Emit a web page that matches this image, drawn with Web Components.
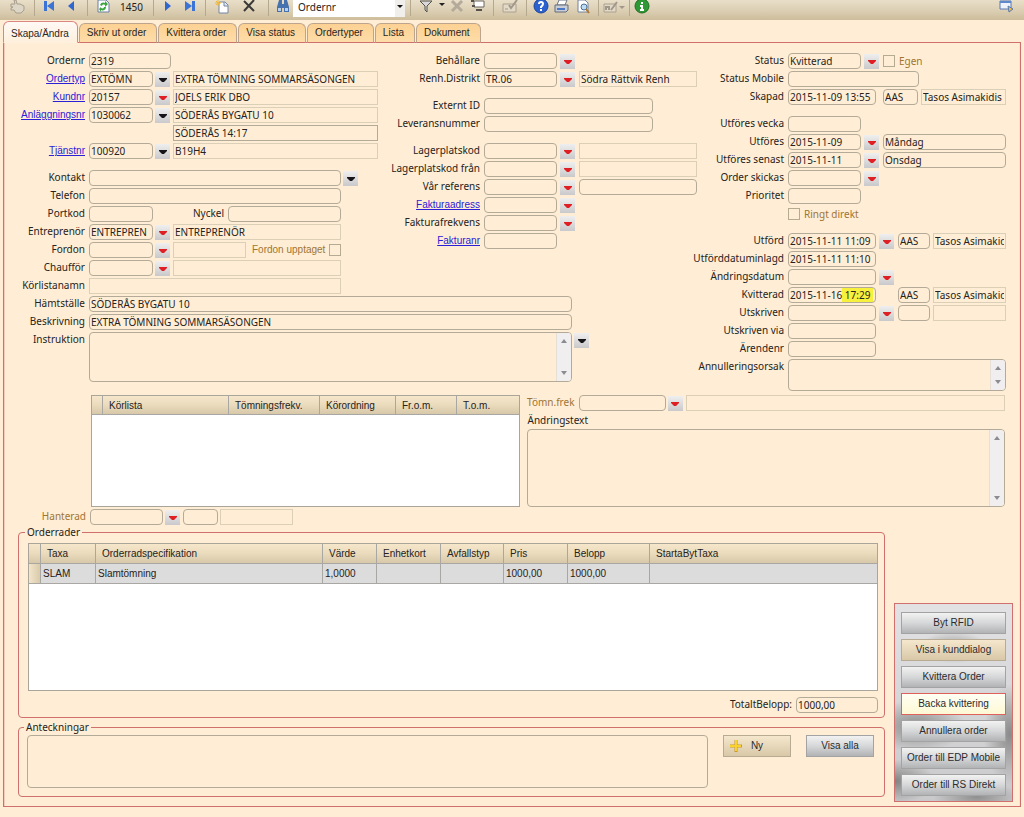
<!DOCTYPE html>
<html lang="sv">
<head>
<meta charset="utf-8">
<meta name="viewport" content="width=device-width, initial-scale=1">
<title>Order 2319</title>
<style>
  html, body { margin: 0; padding: 0; }
  body {
    background: #ffeed5;
    color: #262220;
    font: 10px/14px "Noto Sans", "Liberation Sans", sans-serif;
    --paper: #ffeed5;
    --line: #b3aa98;
    --faint: #dccfb8;
    --red: #d0706c;
    --brown: #a07434;
    --sans: "Liberation Sans", Arial, sans-serif;
  }
</style>
</head>
<body>
<order-page></order-page>

<template id="page">
  <style>
    :host { display: block; }
    .form { display: grid; grid-template-columns: 391fr 295fr 316fr; grid-template-rows: auto 1fr; padding: 10px 14px 0 0; }
    .col { display: flex; flex-direction: column; gap: 2px; min-width: 0; }
    .left { --lw: 81px; --gap: 2px; }
    .mid { --lw: 85px; --gap: 3px; }
    .right { grid-column: 3; grid-row: 1 / 3; --lw: 94px; --gap: 3px; }
    .wide { grid-column: 1 / 3; padding-top: 2px; --lw: 81px; --gap: 2px; }
    .brk { margin-top: 9px; }
    .middle { display: grid; grid-template-columns: 429fr 479fr; gap: 7px; padding: 4px 15px 0 87px; }
    .middle > .col { --lw: 48px; --gap: 2px; gap: 0; }
    .hant { margin-top: 2px; --lw: 82px; --gap: 2px; }
    .bottom { display: grid; grid-template-columns: 1fr 119px; column-gap: 9px; padding: 0 7px 4px 14px; }
    .sets { display: flex; flex-direction: column; gap: 2px; min-width: 0; padding-bottom: 5px; }
    .side { align-self: end; }
    .total { margin-top: 6px; display: flex; justify-content: flex-end; --lw: 80px; }
    .notes { display: flex; gap: 15px; align-items: flex-start; padding: 0 4px 0 0; }
    .notes note-area { flex: 1; }
    .sp1 { width: 1px; } .sp16 { width: 16px; } .sp0 { width: 72px; }
  </style>
  <tool-bar></tool-bar>
  <tab-strip></tab-strip>
  <main-panel>
    <div class="form">
      <div class="col left">
        <form-field label="Ordernr" value="2319" w="82"></form-field>
        <form-field label="Ordertyp" link value="EXTÖMN" w="64"><drop-button name="Ordertyp"></drop-button><text-box flat w="205" value="EXTRA TÖMNING SOMMARSÄSONGEN" name="Ordertyp, namn"></text-box></form-field>
        <form-field label="Kundnr" link value="20157" w="64"><drop-button red name="Kundnr"></drop-button><text-box flat w="205" value="JOELS ERIK DBO" name="Kund, namn"></text-box></form-field>
        <form-field label="Anläggningsnr" link value="1030062" w="64"><drop-button name="Anläggningsnr"></drop-button><text-box flat w="205" value="SÖDERÅS BYGATU 10" name="Anläggning, adress"></text-box></form-field>
        <form-field><span class="sp0"></span><span style="width:8px"></span><text-box square w="205" value="SÖDERÅS 14:17" name="Fastighet"></text-box></form-field>
        <form-field label="Tjänstnr" link value="100920" w="64"><drop-button name="Tjänstnr"></drop-button><text-box flat w="205" value="B19H4" name="Tjänst, namn"></text-box></form-field>
        <form-field class="brk" label="Kontakt" w="252"><drop-button name="Kontakt"></drop-button></form-field>
        <form-field label="Telefon" w="252"></form-field>
        <form-field label="Portkod" w="64"><form-field style="--lw:69px" label="Nyckel" w="113"></form-field></form-field>
        <form-field label="Entreprenör" value="ENTREPREN" w="64"><drop-button red name="Entreprenör"></drop-button><text-box flat w="168" value="ENTREPRENÖR" name="Entreprenör, namn"></text-box></form-field>
        <form-field label="Fordon" w="64"><drop-button red name="Fordon"></drop-button><text-box flat w="73" name="Fordon, namn"></text-box><check-box before label="Fordon upptaget"></check-box></form-field>
        <form-field label="Chaufför" w="64"><drop-button red name="Chaufför"></drop-button><text-box flat w="168" name="Chaufför, namn"></text-box></form-field>
        <form-field label="Körlistanamn" w="252" flat></form-field>
      </div>
      <div class="col mid">
        <form-field label="Behållare" w="73"><drop-button red name="Behållare"></drop-button></form-field>
        <form-field label="Renh.Distrikt" value="TR.06" w="73"><drop-button red name="Renh.Distrikt"></drop-button><text-box flat w="118" value="Södra Rättvik Renh" name="Distrikt, namn"></text-box></form-field>
        <form-field class="brk" label="Externt ID" w="169"></form-field>
        <form-field label="Leveransnummer" w="169"></form-field>
        <form-field class="brk" label="Lagerplatskod" w="73"><drop-button red name="Lagerplatskod"></drop-button><text-box flat w="118" name="Lagerplats"></text-box></form-field>
        <form-field label="Lagerplatskod från" w="73"><drop-button red name="Lagerplatskod från"></drop-button><text-box flat w="118" name="Lagerplats från"></text-box></form-field>
        <form-field label="Vår referens" w="73"><drop-button red name="Vår referens"></drop-button><text-box w="118" name="Vår referens, namn"></text-box></form-field>
        <form-field label="Fakturaadress" link w="73"><drop-button red name="Fakturaadress"></drop-button></form-field>
        <form-field label="Fakturafrekvens" w="73"><drop-button red name="Fakturafrekvens"></drop-button></form-field>
        <form-field label="Fakturanr" link w="73"></form-field>
      </div>
      <div class="col right">
        <form-field label="Status" value="Kvitterad" w="73"><drop-button red name="Status"></drop-button><check-box label="Egen"></check-box></form-field>
        <form-field label="Status Mobile" w="131"></form-field>
        <form-field label="Skapad" value="2015-11-09 13:55" w="88"><span class="sp1"></span><text-box w="35" value="AAS" name="Skapad av"></text-box><text-box flat w="85" value="Tasos Asimakidis" name="Skapad av, namn"></text-box></form-field>
        <form-field class="brk" label="Utföres vecka" w="73"></form-field>
        <form-field label="Utföres" value="2015-11-09" w="73"><drop-button red name="Utföres"></drop-button><text-box w="123" value="Måndag" name="Utföres, veckodag"></text-box></form-field>
        <form-field label="Utföres senast" value="2015-11-11" w="73"><drop-button red name="Utföres senast"></drop-button><text-box w="123" value="Onsdag" name="Utföres senast, veckodag"></text-box></form-field>
        <form-field label="Order skickas" w="73"><drop-button red name="Order skickas"></drop-button></form-field>
        <form-field label="Prioritet" w="73"></form-field>
        <form-field><check-box label="Ringt direkt"></check-box></form-field>
        <form-field class="brk" label="Utförd" value="2015-11-11 11:09" w="88"><drop-button red name="Utförd"></drop-button><text-box w="32" value="AAS" name="Utförd av"></text-box><text-box flat w="73" value="Tasos Asimakidis" name="Utförd av, namn"></text-box></form-field>
        <form-field label="Utförddatuminlagd" value="2015-11-11 11:10" w="88"></form-field>
        <form-field label="Ändringsdatum" w="88"><drop-button red name="Ändringsdatum"></drop-button></form-field>
        <form-field label="Kvitterad" value="2015-11-16 17:29" w="88" mark><span class="sp16"></span><text-box w="32" value="AAS" name="Kvitterad av"></text-box><text-box flat w="73" value="Tasos Asimakidis" name="Kvitterad av, namn"></text-box></form-field>
        <form-field label="Utskriven" w="88"><drop-button red name="Utskriven"></drop-button><text-box w="32" name="Utskriven av"></text-box><text-box flat w="73" name="Utskriven av, namn"></text-box></form-field>
        <form-field label="Utskriven via" w="88"></form-field>
        <form-field label="Ärendenr" w="88"></form-field>
        <note-area label="Annulleringsorsak" h="32" w="218" bar></note-area>
      </div>
      <div class="col wide">
        <form-field label="Hämtställe" value="SÖDERÅS BYGATU 10" w="483"></form-field>
        <form-field label="Beskrivning" value="EXTRA TÖMNING SOMMARSÄSONGEN" w="483"></form-field>
        <note-area label="Instruktion" h="50" w="483" bar><drop-button name="Instruktion"></drop-button></note-area>
      </div>
    </div>

    <div class="middle">
      <data-grid h="112" cols="11,126,91,76,61,0" heads="|Körlista|Tömningsfrekv.|Körordning|Fr.o.m.|T.o.m." name="Körlistor"></data-grid>
      <div class="col">
        <form-field brown label="Tömn.frek" w="87"><drop-button red name="Tömn.frek"></drop-button><text-box flat fill name="Tömningsfrekvens, namn"></text-box></form-field>
        <note-area stack label="Ändringstext" h="78" bar></note-area>
      </div>
    </div>
    <form-field class="hant" brown label="Hanterad" w="73"><drop-button red name="Hanterad"></drop-button><text-box w="35" name="Hanterad av"></text-box><text-box flat w="73" name="Hanterad av, namn"></text-box></form-field>

    <div class="bottom">
      <div class="sets">
        <group-box legend="Orderrader">
          <data-grid h="148" cols="12,55,227,54,64,63,64,82,0" heads="|Taxa|Orderradspecifikation|Värde|Enhetkort|Avfallstyp|Pris|Belopp|StartaBytTaxa" row="|SLAM|Slamtömning|1,0000|||1000,00|1000,00|" name="Orderrader"></data-grid>
          <div class="total"><form-field label="TotaltBelopp:" value="1000,00" w="82"></form-field></div>
        </group-box>
        <group-box legend="Anteckningar">
          <div class="notes">
            <note-area name="Anteckningar" h="53" fill></note-area>
            <push-button tan plus w="68">Ny</push-button>
            <push-button w="68">Visa alla</push-button>
          </div>
        </group-box>
      </div>
      <action-panel class="side">
        <push-button>Byt RFID</push-button>
        <push-button tan>Visa i kunddialog</push-button>
        <push-button>Kvittera Order</push-button>
        <push-button hot>Backa kvittering</push-button>
        <push-button>Annullera order</push-button>
        <push-button>Order till EDP Mobile</push-button>
        <push-button>Order till RS Direkt</push-button>
      </action-panel>
    </div>
  </main-panel>
</template>

<template id="toolbar">
  <style>
    :host { display: block; }
    .bar { display: flex; height: 20px; padding: 0 8px 0 6px; align-items: flex-start; overflow: hidden;
      background: linear-gradient(#e9dfc9, #d9ccb0 60%, #cdbd9c); box-sizing: border-box; }
    button { border: 0; padding: 0; margin: 0; background: none; height: 14px; display: flex; justify-content: center; align-items: flex-start; flex: none; }
    svg { display: block; flex: none; }
    i { width: 1px; height: 16px; margin: 0 4px; background: #b4a88f; flex: none; }
    .n { width: 35px; text-align: center; flex: none; }
    .pick { display: flex; position: relative; width: 112px; margin-right: 1px; flex: none; }
    select { appearance: none; width: 100%; height: 17px; border: 0; border-radius: 0; background: #fff; font: inherit; color: inherit; padding: 0 16px 3px 5px; }
    .pick svg { position: absolute; right: 0; top: 0; pointer-events: none; }
    .end { margin-left: auto; }
  </style>
  <div class="bar">
    <button aria-label="Välj" style="width:24px"><svg width="16" height="14"><path d="M4 0h2l1 4h3l4 2v4l-3 3H6L4 10H1V8l2-1H1V4h4z" fill="#ddd5c5" stroke="#a79d8b"/></svg></button><i></i>
    <button aria-label="Första" style="width:20px"><svg width="12" height="12"><path d="M1 1h3v10H1z" fill="#3c73d6"/><path d="M11 1v10L4 6z" fill="#3c73d6"/></svg></button>
    <button aria-label="Föregående" style="width:24px"><svg width="8" height="12"><path d="M7 1v10L1 6z" fill="#2f66cf"/></svg></button><i></i>
    <button aria-label="Uppdatera" style="width:22px"><svg width="14" height="14"><path d="M2 0h8l3 3v9H2z" fill="#fafcff" stroke="#6c7f9c"/><path d="M4 5c1-3 4-3 5-2V1l3 3-3 3V5C7 4 6 5 6 6z" fill="#3ca53c"/><path d="M10 7c0 3-3 4-5 3v2L3 9l2-2v1c2 1 3 0 3-1z" fill="#3ca53c"/></svg></button>
    <span class="n">1450</span><i></i>
    <button aria-label="Nästa" style="width:20px"><svg width="8" height="12"><path d="M1 1v10l6-5z" fill="#2f66cf"/></svg></button>
    <button aria-label="Sista" style="width:23px"><svg width="12" height="12"><path d="M8 1h3v10H8z" fill="#3c73d6"/><path d="M1 1v10l7-5z" fill="#3c73d6"/></svg></button><i></i>
    <button aria-label="Ny" style="width:24px"><svg width="14" height="14"><path d="M4 2h6l3 3v8H4z" fill="#fff" stroke="#7286a3"/><path d="M9 2v4h4" fill="#dce6f4" stroke="#7286a3"/><path d="M3 0v6M0 3h6M1 1l4 4M5 1L1 5" stroke="#eeb93c"/></svg></button>
    <button aria-label="Ta bort" style="width:30px"><svg width="14" height="13"><path d="M2 1l10 10M12 0L2 11" stroke="#3b3a38" stroke-width="2" fill="none"/></svg></button><i></i>
    <button aria-label="Sök" style="width:20px"><svg width="14" height="13"><path d="M3 0h3v4h2V0h3l2 7v5H8V8H6v4H1V7z" fill="#4672ad"/><path d="M2 8h3v3H2zM9 8h3v3H9z" fill="#b8d0ee"/></svg></button>
    <span class="pick"><select aria-label="Sökfält"><option>Ordernr</option></select><svg width="10" height="17"><path d="M0 0h10v17H0z" fill="#f1efec"/><path d="M2 5h6L5 8z" fill="#111"/></svg></span><i></i>
    <button aria-label="Filter" style="width:22px"><svg width="14" height="13"><path d="M1 1h12L8 6v6l-2-2V6z" fill="#d8d8d8" stroke="#55524d"/></svg></button>
    <button aria-label="Filtermeny" style="width:10px"><svg width="8" height="8"><path d="M1 3h6L4 6z" fill="#222"/></svg></button>
    <button aria-label="Rensa filter" style="width:20px"><svg width="14" height="13"><path d="M2 1l10 10M12 1L2 11" stroke="#b3aa9a" stroke-width="3" fill="none"/></svg></button>
    <button aria-label="Visa" style="width:22px"><svg width="14" height="13"><path d="M3 1h10v6H3z" fill="#fff" stroke="#6a6763"/><path d="M0 1h3M1 6h3M5 10h6" stroke="#55524d" stroke-width="2" fill="none"/></svg></button><i></i>
    <button aria-label="Kontrollera" style="width:24px"><svg width="16" height="13"><path d="M1 4h13v8H1z" fill="#e2d9c7" stroke="#aaa08e"/><path d="M7 5l2 3 6-8" stroke="#a1988a" stroke-width="2" fill="none"/><path d="M3 9h3" stroke="#a1988a"/></svg></button><i></i>
    <button aria-label="Hjälp" style="width:20px"><svg width="16" height="14" viewBox="0 1 16 14"><circle cx="8" cy="7" r="7" fill="#2b62d0" stroke="#1d459a"/><path d="M6 5q0-2 2-2t2 2q0 1-2 3v1M8 10v2" stroke="#fff" stroke-width="2" fill="none"/></svg></button>
    <button aria-label="Skriv ut" style="width:21px"><svg width="16" height="13"><path d="M5 0h8l-2 5H3z" fill="#fff" stroke="#6f7784"/><path d="M1 5h13v5l-2 2H1z" fill="#c9ced6" stroke="#626b79"/><path d="M3 9h8" stroke="#4a78c4" stroke-width="2"/></svg></button>
    <button aria-label="Förhandsgranska" style="width:22px"><svg width="14" height="14"><path d="M2 0h7l3 3v9H2z" fill="#fff" stroke="#73839b"/><circle cx="8" cy="7" r="3" fill="#bcdcf4" stroke="#4c6f96"/><path d="M10 9l3 4" stroke="#b4792e" stroke-width="2"/></svg></button><i></i>
    <button aria-label="Redigera" style="width:22px"><svg width="22" height="13"><path d="M1 4h12v8H1z" fill="#e2d9c7" stroke="#aaa08e"/><path d="M3 10V7h3v3M8 10l6-8" stroke="#a1988a" stroke-width="2" fill="none"/><path d="M16 6h6l-3 3z" fill="#a1988a"/></svg></button><i></i>
    <button aria-label="Information" style="width:16px"><svg width="16" height="14" viewBox="0 1 16 14"><circle cx="8" cy="7" r="7" fill="#2f9a35" stroke="#1f6d26"/><path d="M8 3v2M6 7h2v4M6 11h4" stroke="#fff" stroke-width="2" fill="none"/></svg></button>
    <button class="end" aria-label="Fönster" style="width:18px"><svg width="16" height="13"><path d="M1 1h11v8H1z" fill="#eef3fb" stroke="#5578b4"/><path d="M1 1h11v2H1z" fill="#5e88cc"/><path d="M9 6l5 3-4 3z" fill="#eebb44" stroke="#5578b4"/></svg></button>
  </div>
</template>

<script>
const esc = s => (s || '').replace(/&/g, '&amp;').replace(/</g, '&lt;').replace(/"/g, '&quot;');

function element(name, render) {
  customElements.define(name, class extends HTMLElement {
    connectedCallback() {
      if (this.shadowRoot) return;
      const root = this.attachShadow({ mode: 'open' });
      const out = render(this, n => this.hasAttribute(n), n => this.getAttribute(n));
      if (typeof out === 'string') root.innerHTML = out; else root.append(out);
    }
  });
}

const inputCss = `
  input { box-sizing: border-box; height: 16px; margin: 0; padding: 0 1px 0 1px; border: 1px solid var(--line);
    border-radius: 4px; background: var(--paper); font: inherit; color: inherit; outline: 0; min-width: 0; }
  input.flat { border-color: var(--faint); border-radius: 0; }
  input.square { border-radius: 0; }
  input.mark { background: linear-gradient(#f7f03c, #f7f03c) 53px 0 / 31px 14px no-repeat var(--paper); }`;

element('form-field', (el, has, get) => {
  const label = get('label');
  const text = has('link') ? `<a href="#">${esc(label)}</a>` : esc(label);
  return `<style>
    :host { display: flex; align-items: center; gap: var(--gap, 2px); height: 16px; }
    .l { flex: none; box-sizing: border-box; width: calc(var(--lw) + 4px - var(--gap, 2px)); padding: 0 calc(4px - var(--gap, 2px)) 2px 0;
      display: flex; justify-content: flex-end; white-space: nowrap; line-height: 14px; }
    .link { padding-bottom: 0; }
    .brown { color: var(--brown); }
    a { color: #2a20d8; font-family: var(--sans); }
    ${inputCss}
    input { flex: none; width: ${get('w') || 0}px; }
    </style>
    ${label ? `<label class="l ${has('brown') ? 'brown' : ''} ${has('link') ? 'link' : ''}" for="f">${text}</label>
      <input id="f" type="text" class="${has('flat') ? 'flat' : ''} ${has('mark') ? 'mark' : ''}" value="${esc(get('value'))}">` : '<span class="l"></span>'}
    <slot></slot>`;
});

element('text-box', (el, has, get) => `<style>
  :host { display: flex; ${has('fill') ? 'flex: 1; min-width: 0;' : 'flex: none;'} }
  ${inputCss}
  input { width: ${has('fill') ? '100%' : get('w') + 'px'}; }
  </style><input type="text" aria-label="${esc(get('name'))}" class="${has('flat') ? 'flat' : has('square') ? 'square' : ''}" value="${esc(get('value'))}">`);

element('drop-button', (el, has, get) => `<style>
  :host { display: block; flex: none; padding-top: 1px; }
  button { display: flex; align-items: center; justify-content: center; width: 15px; height: 15px; padding: 1px 0 0; border: 0;
    background: linear-gradient(#efefef, #c9c9cb); margin-right: 1px; }
  </style><button type="button" aria-label="${esc(get('name'))}: välj"><svg width="8" height="5"><path d="M0 0h8v1L5 4H3L0 1z" fill="${has('red') ? '#df1f24' : '#16161a'}"/></svg></button>`);

element('check-box', (el, has, get) => `<style>
  :host { display: flex; align-items: center; }
  label { color: var(--brown); white-space: nowrap; display: flex; align-items: center; gap: 4px; ${has('before') ? 'flex-direction: row-reverse; font-family: var(--sans); margin-left: 4px;' : ''} }
  input { appearance: none; box-sizing: border-box; width: 12px; height: 12px; margin: 0; border: 1px solid #b5ab93; background: var(--paper); }
  </style><label><input type="checkbox">${esc(get('label'))}</label>`);

element('note-area', (el, has, get) => `<style>
  :host { display: flex; ${has('stack') ? 'flex-direction: column; align-items: stretch; padding-top: 2px;' : 'align-items: flex-start; gap: var(--gap, 2px);'} }
  label { flex: none; box-sizing: border-box; white-space: nowrap; line-height: 14px;
    ${has('stack') ? 'padding: 0 1px 2px; height: 16px;' : 'width: calc(var(--lw) + 4px - var(--gap, 2px)); padding-right: calc(4px - var(--gap, 2px)); display: flex; justify-content: flex-end;'} }
  .box { display: flex; box-sizing: border-box; height: ${get('h')}px; ${get('w') ? `width: ${get('w')}px; flex: none;` : has('stack') ? '' : 'flex: 1;'}
    border: 1px solid var(--line); border-radius: 4px; overflow: hidden; }
  textarea { flex: 1; min-width: 0; resize: none; border: 0; margin: 0; padding: 2px; background: none; font: inherit; color: inherit; outline: 0; overflow: hidden; }
  .bar { width: 15px; background: #f1eef0; border-left: 1px solid #e6dfd6; display: flex; flex-direction: column; justify-content: space-between; align-items: center; padding: 6px 0; box-sizing: border-box; }
  svg { display: block; }
  </style>
  ${get('label') ? `<label for="t">${esc(get('label'))}</label>` : ''}
  <div class="box"><textarea id="t" ${get('label') ? '' : `aria-label="${esc(get('name'))}"`}></textarea>
  ${has('bar') ? '<div class="bar" aria-hidden="true"><svg width="6" height="4"><path d="M3 0l3 4H0z" fill="#8b8b92"/></svg><svg width="6" height="4"><path d="M0 0h6L3 4z" fill="#8b8b92"/></svg></div>' : ''}</div><slot></slot>`);

element('data-grid', (el, has, get) => {
  const cols = get('cols').split(','), heads = get('heads').split('|'), row = get('row');
  return `<style>
  :host { display: block; min-width: 0; box-sizing: border-box; height: ${get('h')}px; border: 1px solid #aaa59b; background: #fff; }
  table { width: 100%; table-layout: fixed; border-collapse: separate; border-spacing: 0; font-family: var(--sans); }
  th, td { box-sizing: border-box; height: ${row ? 20 : 19}px; text-align: left; font-weight: normal; white-space: nowrap; overflow: hidden;
    border-right: 1px solid #a9a7a3; border-bottom: 1px solid #a9a7a3; }
  th:last-child, td:last-child { border-right: 0; }
  th { padding: 1px 0 0 6px; background: linear-gradient(#f6e7cb, #eadbbd 50%, #d8c8aa); }
  td { padding: 1px 0 0 2px; background: #dcdcdc; }
  td:first-child { background: linear-gradient(90deg, #f3e5ca, #d9caab); }
  </style><table aria-label="${esc(get('name'))}"><colgroup>${cols.map(c => c === '0' ? '<col>' : `<col style="width:${c}px">`).join('')}</colgroup>
  <thead><tr>${heads.map(h => `<th scope="col">${esc(h)}</th>`).join('')}</tr></thead>
  ${row ? `<tbody><tr>${row.split('|').map(c => `<td>${esc(c)}</td>`).join('')}</tr></tbody>` : ''}</table>`;
});

element('group-box', (el, has, get) => `<style>
  :host { display: block; }
  fieldset { margin: 0; min-width: 0; border: 1px solid var(--red); border-radius: 4px; padding: 4px 6px 4px 9px; }
  :host([legend="Anteckningar"]) fieldset { padding: 1px 6px 8px 8px; }
  legend { padding: 0 2px; margin-left: -3px; line-height: 14px; }
  </style><fieldset><legend>${esc(get('legend'))}</legend><slot></slot></fieldset>`);

element('push-button', (el, has, get) => `<style>
  :host { display: block; flex: none; ${get('w') ? `width: ${get('w')}px;` : ''} }
  button { position: relative; box-sizing: border-box; display: flex; align-items: center; justify-content: center; width: 100%; height: 22px; padding: 0;
    border: 1px solid #a3a3a3; background: linear-gradient(#f2f2f2, #d6d7d8 50%, #b2b3b4); font: 10px/14px var(--sans); color: #2b2b2e; white-space: nowrap; }
  button.tan { background: linear-gradient(#f5e7cd, #d9c8a8); border-color: #b8ab94; }
  button.hot { background: linear-gradient(#fffff4, #fdf8d4); border-color: #e0605c; }
  svg { position: absolute; left: 6px; top: 4px; }
  </style><button type="button" class="${has('tan') ? 'tan' : has('hot') ? 'hot' : ''}">${has('plus') ? '<svg width="12" height="12"><path d="M6 0v12M0 6h12" stroke="#c9992a" stroke-width="3"/><path d="M6 0v11M0 6h11" stroke="#fad22c" stroke-width="2"/></svg>' : ''}<slot></slot></button>`);

element('action-panel', () => `<style>
  :host { display: flex; flex-direction: column; gap: 5px; box-sizing: border-box; padding: 8px 6px 5px; border: 1px solid var(--red);
    background:
      radial-gradient(ellipse 34px 16px at 50% 22%, #a2a2a2, #a2a2a200),
      radial-gradient(ellipse 50px 26px at 18% 62%, #8c8c8c, #8c8c8c00),
      radial-gradient(ellipse 26px 50px at 98% 66%, #8a8a8a, #8a8a8a00),
      radial-gradient(ellipse 40px 22px at 0 90%, #838383, #83838300),
      radial-gradient(ellipse 44px 14px at 70% 98%, #8f8f8f, #8f8f8f00),
      linear-gradient(#e2e2e4, #d6d6d8 50%, #c9c9cb); }
  </style><slot></slot>`);

element('main-panel', () => `<style>
  :host { display: block; margin: -1px 3px 9px; border: 1px solid var(--red); box-shadow: inset 1px 0 #f7c9b8, inset -1px 0 #fbe0cc; }
  </style><slot></slot>`);

element('tab-strip', () => `<style>
  :host { display: block; position: relative; }
  nav { display: flex; align-items: flex-end; gap: 1px; padding: 1px 3px 0; }
  a { box-sizing: border-box; height: 20px; padding: 2px 10px 0 7px; border: 1px solid #bda58d; border-bottom-color: var(--red); border-radius: 6px 6px 0 0;
    background: linear-gradient(#fcd193, #fedda9); color: #2a2522; text-decoration: none; font-family: var(--sans); white-space: nowrap; }
  a.on { height: 22px; padding: 5px 8px 0 7px; border-color: #d98680; border-bottom-color: #fff1e0; background: linear-gradient(#fffaf5, #fff0dd); }
  </style><nav><a class="on" href="#" aria-current="page">Skapa/Ändra</a><a href="#">Skriv ut order</a><a href="#">Kvittera order</a><a href="#">Visa status</a><a href="#">Ordertyper</a><a href="#">Lista</a><a href="#">Dokument</a></nav>`);

element('tool-bar', () => document.getElementById('toolbar').content.cloneNode(true));
element('order-page', () => document.getElementById('page').content.cloneNode(true));
</script>
</body>
</html>
